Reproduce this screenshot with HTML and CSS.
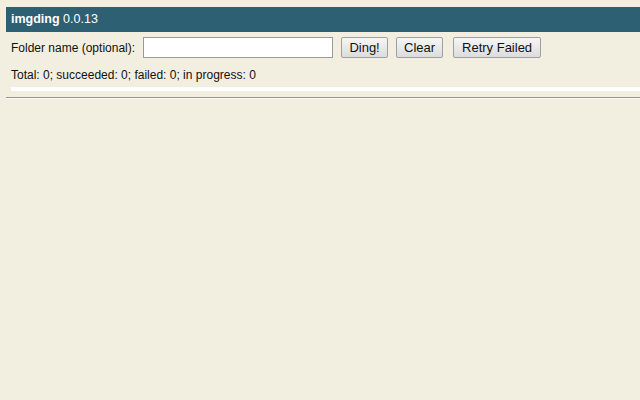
FILE: index.html
```html
<!DOCTYPE html>
<html>
<head>
<meta charset="utf-8">
<link rel="stylesheet" href="styles.css">
</head>
<body>
<div class="page">
  <div class="header"><b>imgding</b> 0.0.13</div>
  <div class="controls">
    <label class="label" for="folder">Folder name (optional):</label>
    <input class="folder" id="folder" type="text">
    <button class="btn btn-ding">Ding!</button>
    <button class="btn btn-clear">Clear</button>
    <button class="btn btn-retry">Retry Failed</button>
  </div>
  <div class="stats">Total: 0; succeeded: 0; failed: 0; in progress: 0</div>
  <div class="progress"></div>
  <hr class="rule">
</div>
</body>
</html>
```
FILE: styles.css
```css
html, body {
  margin: 0;
  padding: 0;
  background: #f2eee0;
  overflow: hidden;
}
body {
  font-family: "Liberation Sans", Arial, sans-serif;
  font-size: 12px;
  color: #111;
}
.page {
  padding: 7px 0 0 6px;
}
.header {
  background: #2e6073;
  color: #fff;
  height: 25px;
  line-height: 25px;
  padding-left: 5px;
  font-size: 12.5px;
}
.controls {
  display: flex;
  align-items: center;
  padding: 5px 0 0 5px;
  height: 21px;
}
.label {
  margin-right: 8px;
}
.folder {
  width: 190px;
  height: 21px;
  box-sizing: border-box;
  border: 1px solid #9a9a9a;
  background: #fff;
  margin: 0 8px 0 0;
  padding: 0 3px;
}
.btn {
  height: 21px;
  box-sizing: border-box;
  border: 1px solid #a0a0a0;
  border-radius: 2px;
  background: linear-gradient(#f6f6f6, #dcdcdc);
  font-family: "Liberation Sans", Arial, sans-serif;
  font-size: 13px;
  color: #111;
  padding: 0 7px;
  margin: 0;
}
.btn-ding { width: 47px; margin-right: 8px; }
.btn-clear { width: 47px; margin-right: 10px; }
.btn-retry { width: 88px; }
.stats {
  padding: 10px 0 0 5px;
  line-height: 14px;
}
.progress {
  margin: 5px 0 0 5px;
  height: 4px;
  background: #ffffff;
}
.rule {
  margin: 6px 0 0 0;
  border: 0;
  border-top: 1px solid #9c9488;
  border-bottom: 1px solid #fbf9f2;
  height: 0;
}
```
